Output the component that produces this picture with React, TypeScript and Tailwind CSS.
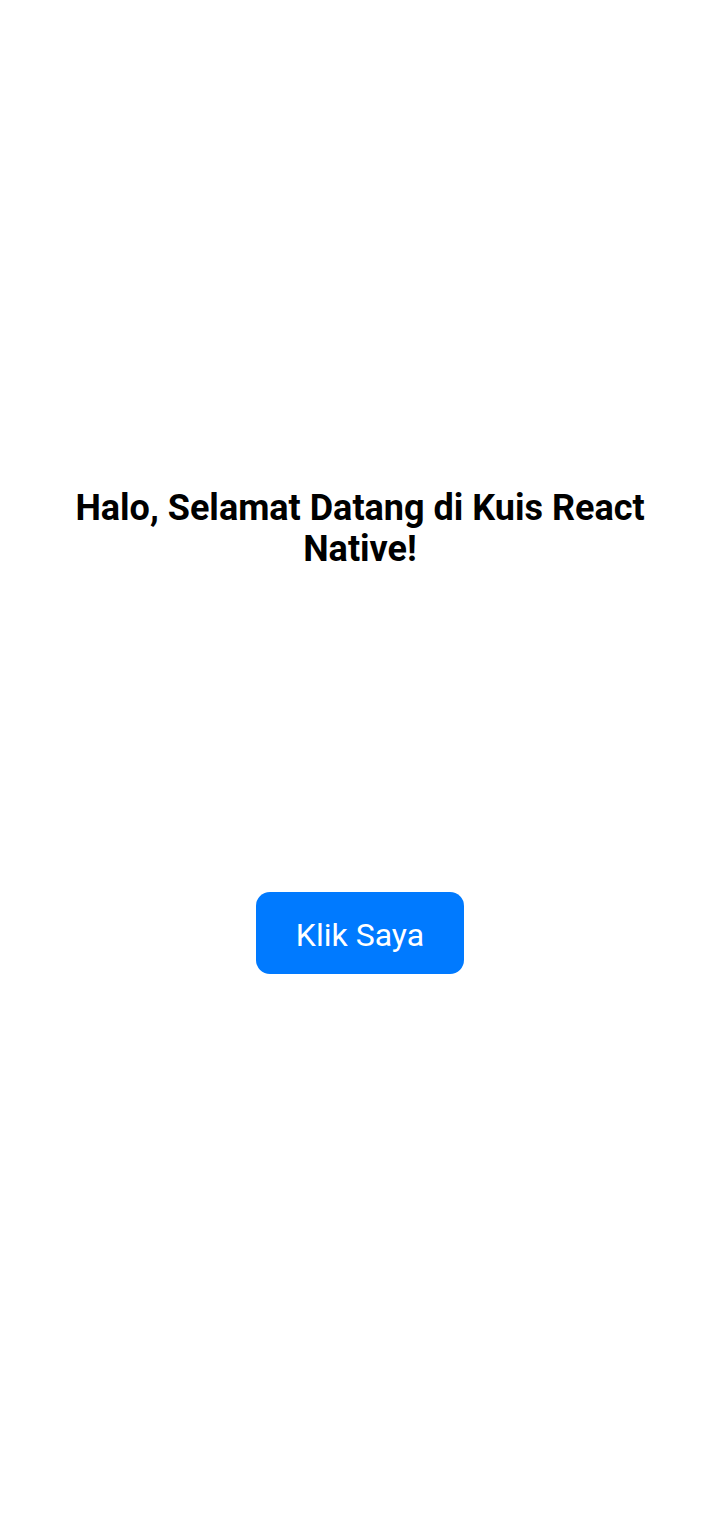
export default function App() {
  return (
    <div className="flex min-h-[1528px] w-full flex-col items-center bg-white font-['Roboto',sans-serif]">
      <h1 className="mt-[488px] px-[30px] text-center text-[36px] font-bold leading-[41px] text-black">
        Halo, Selamat Datang di Kuis React Native!
      </h1>
      <button
        type="button"
        className="mt-[322px] h-[82px] w-[208px] rounded-[14px] bg-[#007aff] pt-[3px] text-[32px] text-white"
      >
        Klik Saya
      </button>
    </div>
  );
}
